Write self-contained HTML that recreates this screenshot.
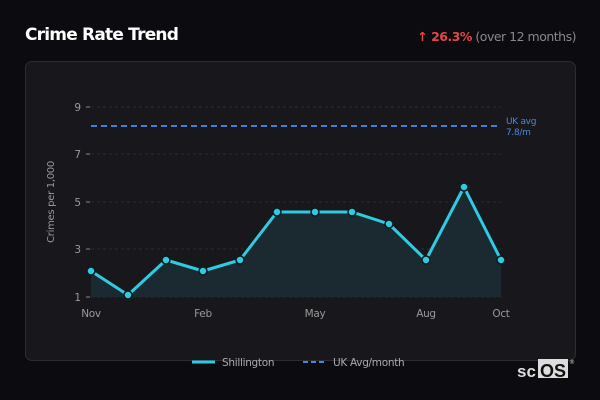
<!DOCTYPE html>
<html><head><meta charset="utf-8"><style>
html,body{margin:0;padding:0;background:#0c0b10;width:600px;height:400px;overflow:hidden;font-family:"DejaVu Sans","Liberation Sans",sans-serif}
.t{position:absolute;left:25px;top:25px;color:#fff;font-weight:bold;font-size:17px;letter-spacing:-0.8px}
.r{position:absolute;right:24px;top:29px;font-size:12.5px;color:#888;letter-spacing:-0.5px}
.r b{color:#e04848}
.p{position:absolute;left:25px;top:61px;width:549px;height:298px;background:#18181c;border:1px solid #2c2c31;border-radius:7px}
</style></head><body>
<div class="t">Crime Rate Trend</div>
<div class="r"><b>↑ 26.3%</b> (over 12 months)</div>
<div class="p"></div>
<svg width="600" height="400" style="position:absolute;left:0;top:0" font-family="DejaVu Sans, Liberation Sans, sans-serif">
<g stroke="#2c2c31" stroke-dasharray="3,3" stroke-width="1">
<line x1="91" x2="501" y1="107" y2="107"/><line x1="91" x2="501" y1="154" y2="154"/><line x1="91" x2="501" y1="202" y2="202"/><line x1="91" x2="501" y1="249" y2="249"/><line x1="91" x2="501" y1="297" y2="297"/>
</g>
<g stroke="#888" stroke-width="1"><line x1="86" x2="90" y1="107" y2="107"/><line x1="86" x2="90" y1="154" y2="154"/><line x1="86" x2="90" y1="202" y2="202"/><line x1="86" x2="90" y1="249" y2="249"/><line x1="86" x2="90" y1="297" y2="297"/></g>
<g fill="#999" font-size="10.5" text-anchor="end"><text x="81" y="111">9</text><text x="81" y="158">7</text><text x="81" y="206">5</text><text x="81" y="253">3</text><text x="81" y="301">1</text></g>
<text transform="translate(54,202) rotate(-90)" fill="#999" font-size="10" text-anchor="middle" letter-spacing="-0.3">Crimes per 1,000</text>
<g fill="#999" font-size="10.5" text-anchor="middle" letter-spacing="-0.3"><text x="91" y="317">Nov</text><text x="203" y="317">Feb</text><text x="315" y="317">May</text><text x="426" y="317">Aug</text><text x="501" y="317">Oct</text></g>
<line x1="91" x2="498" y1="126" y2="126" stroke="#3f7fd6" stroke-width="2" stroke-dasharray="6,4"/>
<text x="506" y="124" fill="#4a86e0" font-size="9" letter-spacing="-0.3">UK avg</text><text x="506" y="135" fill="#4a86e0" font-size="9" letter-spacing="-0.3">7.8/m</text>
<path d="M91,271 L128,295 L166,260 L203,271 L240,260 L277,212 L315,212 L352,212 L389,224 L426,260 L464,187 L501,260 L501,297 L91,297Z" fill="#1a2a30"/>
<polyline points="91,271 128,295 166,260 203,271 240,260 277,212 315,212 352,212 389,224 426,260 464,187 501,260" fill="none" stroke="#2fcbe0" stroke-width="3" stroke-linejoin="round"/>
<g fill="#2fcbe0" stroke="#0e1a1e" stroke-width="1.5">
<circle cx="91" cy="271" r="4"/><circle cx="128" cy="295" r="4"/><circle cx="166" cy="260" r="4"/><circle cx="203" cy="271" r="4"/><circle cx="240" cy="260" r="4"/><circle cx="277" cy="212" r="4"/><circle cx="315" cy="212" r="4"/><circle cx="352" cy="212" r="4"/><circle cx="389" cy="224" r="4"/><circle cx="426" cy="260" r="4"/><circle cx="464" cy="187" r="4"/><circle cx="501" cy="260" r="4"/>
</g>
<line x1="192" x2="215" y1="362" y2="362" stroke="#2fcbe0" stroke-width="3"/>
<text x="222" y="366" fill="#aaa" font-size="10.5" letter-spacing="-0.3">Shillington</text>
<line x1="303" x2="326" y1="362" y2="362" stroke="#4a86e0" stroke-width="2" stroke-dasharray="5,3"/>
<text x="333" y="366" fill="#aaa" font-size="10.5" letter-spacing="-0.3">UK Avg/month</text>
<text x="517" y="377" fill="#ddd" font-size="17" font-weight="bold" font-family="Liberation Sans, sans-serif">sc</text>
<rect x="538" y="359" width="30" height="19" fill="#ddd"/>
<text x="540" y="377" fill="#111" font-size="18" font-weight="bold" font-family="Liberation Sans, sans-serif">OS</text>
<text x="569" y="364" fill="#ccc" font-size="6">®</text>
</svg>
</body></html>
